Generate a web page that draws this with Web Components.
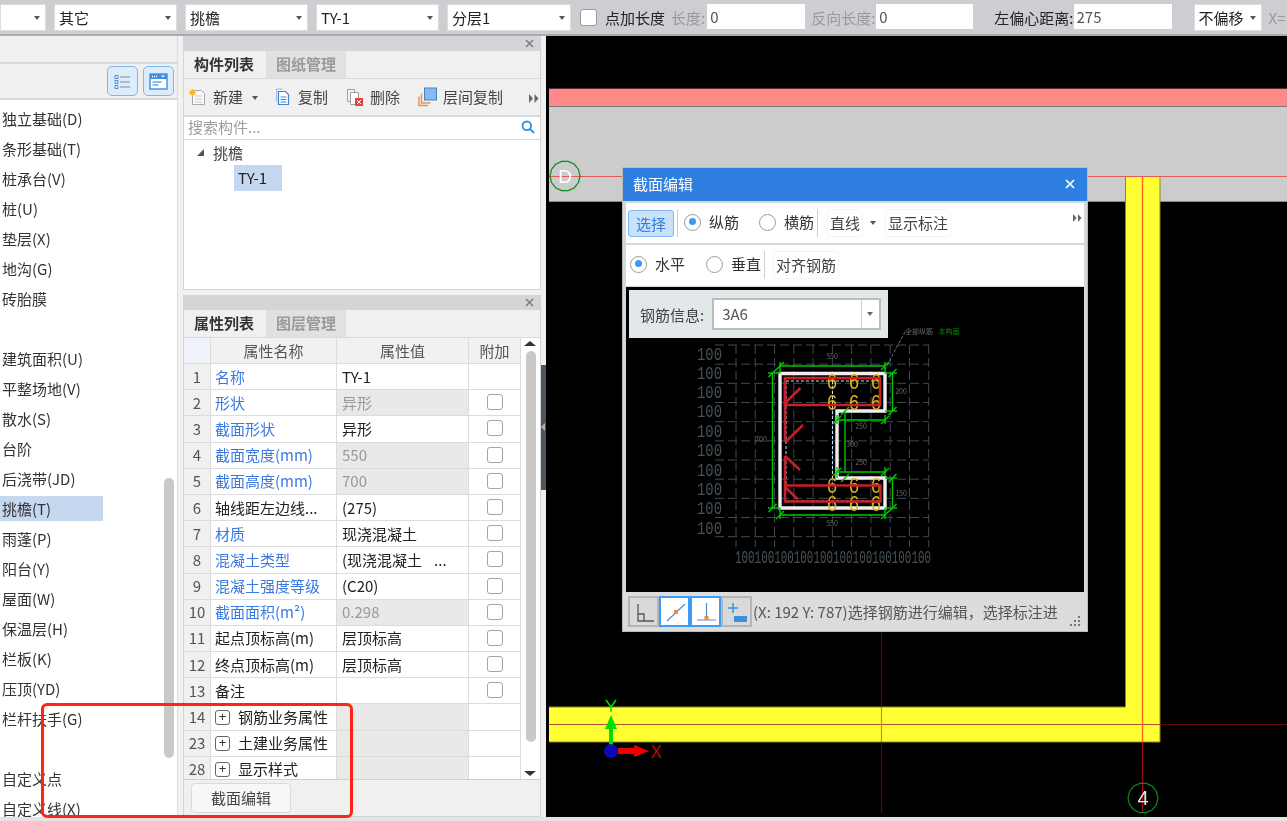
<!DOCTYPE html>
<html lang="zh">
<head>
<meta charset="utf-8">
<title>截面编辑</title>
<style>
    html, body { margin: 0; height: 100%; overflow: hidden; background: #e4e4e4; }
    body { font: 15px/20px "Noto Sans CJK SC", "Noto Sans", sans-serif; color: #222; }
</style>
</head>
<body>
<cad-app></cad-app>

<script>
// little helper so each element only has to hand over its css and markup
class Base extends HTMLElement {
    constructor() {
        super();
        this.attachShadow({ mode: 'open' });
    }
    connectedCallback() { this.render(); }
    paint(css, html) {
        this.shadowRoot.innerHTML = `<style>${css}</style>${html}`;
    }
}

class CadCombo extends Base {
    render() {
        const w = this.getAttribute('w') || 123;
        this.paint(`
            :host { display: block; flex: none; width: ${w}px; height: 27px; }
            .box {
                height: 100%; box-sizing: border-box; background: #fff; border: 1px solid #dcdcdc;
                display: flex; align-items: center; justify-content: space-between; padding: 0 5px 0 4px;
            }
            i { width: 0; height: 0; border: 3.5px solid transparent; border-top: 4px solid #555; border-bottom: 0; }
        `, `<div class="box"><span><slot></slot></span><i></i></div>`);
    }
}
customElements.define('cad-combo', CadCombo);

class CadField extends Base {
    render() {
        const w = this.getAttribute('w') || 98;
        const gap = this.getAttribute('gap') || 0;
        const muted = this.hasAttribute('muted');
        this.paint(`
            :host { display: flex; flex: none; align-items: center; gap: ${gap}px; color: ${muted ? '#9a9a9a' : '#222'}; }
            .val { width: ${w}px; box-sizing: border-box; height: 25px; margin-top: -2px; background: #fff; padding-left: 3px; line-height: 25px; color: #555; }
        `, `<slot></slot><div class="val">${this.getAttribute('value')}</div>`);
    }
}
customElements.define('cad-field', CadField);

class TopBar extends Base {
    render() {
        this.paint(`
            :host {
                display: flex; align-items: center; height: 36px; box-sizing: border-box; flex: none;
                background: #ccced2; border-bottom: 2px solid #a9abae; overflow: hidden; white-space: nowrap; padding-top: 1px;
            }
            .g8 { margin-left: 8px; }
            .chk { flex: none; width: 15px; height: 15px; margin-left: 9px; background: #fff; border: 1px solid #9b9b9b; border-radius: 3px; }
            .lab { margin-left: 8px; }
        `, `
            <cad-combo w="46"></cad-combo>
            <cad-combo class="g8">其它</cad-combo>
            <cad-combo class="g8">挑檐</cad-combo>
            <cad-combo class="g8">TY-1</cad-combo>
            <cad-combo class="g8" w="124">分层1</cad-combo>
            <div class="chk"></div>
            <span class="lab">点加长度</span>
            <cad-field muted value="0" gap="2" style="margin-left:6px">长度:</cad-field>
            <cad-field muted value="0" gap="1" w="97" style="margin-left:6px">反向长度:</cad-field>
            <cad-field value="275" style="margin-left:21px">左偏心距离:</cad-field>
            <cad-combo w="68" style="margin-left:22px">不偏移</cad-combo>
            <span style="margin-left:7px;color:#9a9a9a">X=</span>
        `);
    }
}
customElements.define('top-bar', TopBar);

const NAV_ITEMS = [
    '独立基础(D)', '条形基础(T)', '桩承台(V)', '桩(U)', '垫层(X)', '地沟(G)', '砖胎膜', '',
    '建筑面积(U)', '平整场地(V)', '散水(S)', '台阶', '后浇带(JD)', '挑檐(T)', '雨蓬(P)', '阳台(Y)',
    '屋面(W)', '保温层(H)', '栏板(K)', '压顶(YD)', '栏杆扶手(G)', '', '自定义点', '自定义线(X)'
];

class NavList extends Base {
    render() {
        const rows = NAV_ITEMS.map(t => {
            const on = t === '挑檐(T)' ? ' class="on"' : '';
            return `<div class="row"><span${on}>${t}</span></div>`;
        }).join('');
        this.paint(`
            :host { display: flex; flex-direction: column; flex: none; width: 178px; box-sizing: border-box; border-right: 1px solid #dcdcdc; background: #fff; overflow: hidden; position: relative; }
            .head { height: 26px; background: #f0f0f0; border-bottom: 2px solid #d9d9d9; flex: none; }
            .tools { height: 34px; background: #f0f0f0; border-bottom: 2px solid #d9d9d9; flex: none; display: flex; justify-content: flex-end; align-items: center; gap: 5px; padding-right: 3px; }
            .tools div { width: 31px; height: 30px; box-sizing: border-box; background: #dcecfb; border: 1.5px solid #7cb8f0; border-radius: 5px; display: flex; align-items: center; justify-content: center; }
            .list { padding-top: 3px; color: #333; }
            .row { height: 30px; display: flex; align-items: center; padding-left: 2px; }
            .row span { display: block; height: 25px; line-height: 25px; white-space: nowrap; }
            .row .on { background: #c5d8ef; width: 103px; margin-left: -2px; padding-left: 2px; box-sizing: border-box; }
            .bar { position: absolute; left: 164px; top: 442px; width: 10px; height: 280px; border-radius: 5px; background: #c9c9c9; }
        `, `
            <div class="head"></div>
            <div class="tools">
                <div><svg width="17" height="17" viewBox="0 0 17 17" fill="none" stroke="#4a90d9"><path d="M1 2.5h3v3h-3zM1 7.5h3v3h-3zM1 12.5h3v3h-3z" stroke-width="1"/><path d="M6 4h10M6 9h10M6 14h10" stroke="#888" stroke-width="1.2"/></svg></div>
                <div><svg width="19" height="17" viewBox="0 0 19 17"><rect x="1" y="1" width="17" height="15" fill="#fff" stroke="#3d8fe0" stroke-width="1.4"/><rect x="1" y="1" width="17" height="5" fill="#3d8fe0"/><path d="M3 3.5h5" stroke="#fff" stroke-dasharray="1 1" stroke-width="1.5"/><path d="M12 2.5h4l-2 2z" fill="#fff"/><path d="M3.5 9h9M3.5 12h6" stroke="#6aa8e6" stroke-width="1.3"/></svg></div>
            </div>
            <div class="list">${rows}</div>
            <div class="bar"></div>
        `);
    }
}
customElements.define('nav-list', NavList);

class DockPanel extends Base {
    render() {
        const tabs = this.getAttribute('tabs').split(',');
        this.paint(`
            :host { display: flex; flex-direction: column; box-sizing: border-box; width: 358px; border: 1px solid #d2d4d6; border-top: 0; background: #fff; overflow: hidden; }
            .cap { height: 15px; flex: none; background: #d3d5d9; display: flex; justify-content: flex-end; align-items: center; padding-right: 6px; }
            .tabs { height: 28px; flex: none; display: flex; background: #f0f0f0; border-bottom: 1px solid #d9d9d9; box-sizing: border-box; }
            .tabs span { width: 80px; text-align: center; line-height: 25px; }
            .tabs .on { font-weight: 700; color: #333; }
            .tabs .off { margin-left: 2px; background: #e1e1e1; color: #9a9a9a; font-weight: 700; }
            .body { flex: 1; display: flex; flex-direction: column; min-height: 0; }
        `, `
            <div class="cap"><svg width="9" height="9" viewBox="0 0 9 9"><path d="M1 1l7 7M8 1l-7 7" stroke="#7d7f82" stroke-width="1.6"/></svg></div>
            <div class="tabs"><span class="on">${tabs[0]}</span><span class="off">${tabs[1]}</span></div>
            <div class="body"><slot></slot></div>
        `);
    }
}
customElements.define('dock-panel', DockPanel);

class ComponentList extends Base {
    render() {
        this.paint(`
            :host { display: flex; flex-direction: column; flex: 1; }
            .tools { height: 36px; flex: none; background: #f0f0f0; border-bottom: 2px solid #d9d9d9; display: flex; align-items: center; padding-left: 5px; position: relative; white-space: nowrap; }
            .tools svg { flex: none; }
            .t { margin-left: 6px; color: #444; }
            .arrow { width: 0; height: 0; border: 3.5px solid transparent; border-top: 4px solid #555; border-bottom: 0; margin: 2px 0 0 9px; }
            .more { position: absolute; left: 345px; top: 15px; }
            .search { height: 23px; flex: none; box-sizing: border-box; padding: 0 5px 2px 4px; border-bottom: 1px solid #d9d9d9; display: flex; align-items: center; justify-content: space-between; color: #9d9d9d; }
            .tree { flex: 1; position: relative; }
            .tree .node { display: flex; align-items: center; height: 25px; padding-left: 13px; gap: 9px; color: #444; }
            .tree i { width: 0; height: 0; border-left: 7px solid transparent; border-bottom: 7px solid #555; }
            .leaf { margin: 0 0 0 50px; width: 48px; height: 26px; line-height: 25px; background: #c5d8ef; box-sizing: border-box; padding-left: 4px; }
        `, `
            <div class="tools">
                <svg width="18" height="18" viewBox="0 0 18 18"><path d="M3.5 2.5h9l3 3v11h-12z" fill="#fafafa" stroke="#a8a8a8"/><path d="M6 8h7M6 11h7M6 14h7" stroke="#c8c8c8"/><path d="M3.5 0.5l.9 2 2-.9-.9 2 2 .9-2 .9.9 2-2-.9-.9 2-.9-2-2 .9.9-2-2-.9 2-.9-.9-2 2 .9z" fill="#f5b32c"/></svg>
                <span class="t">新建</span><i class="arrow"></i>
                <svg style="margin-left:17px" width="16" height="18" viewBox="0 0 16 18"><path d="M1.5 1h6" stroke="#9cbbe0"/><path d="M1.5 1v13" stroke="#9cbbe0"/><path d="M3.5 3.5h7l3 3v10h-10z" fill="#fff" stroke="#3d85d0" stroke-width="1.2"/><path d="M5.5 9h6M5.5 11.5h6M5.5 14h6" stroke="#3d85d0"/></svg>
                <span class="t" style="margin-left:7px">复制</span>
                <svg style="margin-left:18px" width="18" height="18" viewBox="0 0 18 18"><path d="M1.5 1.5h7v12h-7z" fill="#f4f4f4" stroke="#a0a0a0"/><path d="M4.5 4.5h8v12h-8z" fill="#fff" stroke="#a0a0a0"/><rect x="9" y="10" width="8" height="8" fill="#e2453c"/><path d="M11 12l4 4M15 12l-4 4" stroke="#fff"/></svg>
                <span class="t">删除</span>
                <svg style="margin-left:18px" width="19" height="20" viewBox="0 0 19 20"><path d="M1 9.5v9h9" fill="none" stroke="#f0923a" stroke-width="1.4"/><path d="M3.5 6.5v9.500h9" fill="none" stroke="#f0923a" stroke-width="1.4"/><rect x="6.500" y="1" width="12" height="12" fill="#8ab8ec" stroke="#3d85d0"/></svg>
                <span class="t">层间复制</span>
                <svg class="more" width="10" height="9" viewBox="0 0 10 9"><path d="M0 0l4 4.500-4 4.500zM5.500 0l4 4.500-4 4.500z" fill="#666"/></svg>
            </div>
            <div class="search"><span>搜索构件...</span>
                <svg width="14" height="14" viewBox="0 0 14 14" fill="none" stroke="#2f8fdc" stroke-width="1.8"><circle cx="5.800" cy="5.800" r="4.300"/><path d="M9 9l4 4"/></svg>
            </div>
            <div class="tree">
                <div class="node"><i></i><span>挑檐</span></div>
                <div class="leaf">TY-1</div>
            </div>
        `);
    }
}
customElements.define('component-list', ComponentList);

// [number, name, value, blue name, greyed value, checkbox, group row]
const PROP_ROWS = [
    [1, '名称', 'TY-1', 1, 0, 0],
    [2, '形状', '异形', 1, 1, 1],
    [3, '截面形状', '异形', 1, 0, 1],
    [4, '截面宽度(mm)', '550', 1, 1, 1],
    [5, '截面高度(mm)', '700', 1, 1, 1],
    [6, '轴线距左边线...', '(275)', 0, 0, 1],
    [7, '材质', '现浇混凝土', 1, 0, 1],
    [8, '混凝土类型', '(现浇混凝土<b>...</b>', 1, 0, 1],
    [9, '混凝土强度等级', '(C20)', 1, 0, 1],
    [10, '截面面积(m²)', '0.298', 1, 1, 1],
    [11, '起点顶标高(m)', '层顶标高', 0, 0, 1],
    [12, '终点顶标高(m)', '层顶标高', 0, 0, 1],
    [13, '备注', '', 0, 0, 1],
    [14, '钢筋业务属性', '', 0, 2, 0, 1],
    [23, '土建业务属性', '', 0, 2, 0, 1],
    [28, '显示样式', '', 0, 2, 0, 1]
];

class PropTable extends Base {
    render() {
        const cells = PROP_ROWS.map(([n, name, val, blue, grey, chk, group]) => {
            const plus = group ? '<em>+</em>' : '';
            const vCls = grey === 1 ? 'v grey' : grey === 2 ? 'v fill' : 'v';
            return `<div class="c n">${n}</div>
                <div class="c name${blue ? ' blue' : ''}${group ? ' grp' : ''}">${plus}<span>${name}</span></div>
                <div class="c ${vCls}">${val}</div>
                <div class="c a">${chk ? '<u></u>' : ''}</div>`;
        }).join('');
        this.paint(`
            :host { display: flex; flex-direction: column; flex: 1; min-height: 0; }
            .wrap { flex: 1; display: flex; min-height: 0; overflow: hidden; border-bottom: 1px solid #cfcfcf; }
            .grid { display: grid; grid-template-columns: 27px 126px 132px 52px; grid-template-rows: 26px; grid-auto-rows: 26.2px; width: 337px; flex: none; align-content: start; }
            .c { box-sizing: border-box; border-right: 1.5px solid #dcdcdc; border-bottom: 1.5px solid #dcdcdc; display: flex; align-items: center; white-space: nowrap; padding-left: 4px; color: #222; background: #fff; }
            .h { background: #f1f1f1; justify-content: center; padding: 0; color: #555; }
            .h0 { background: #f0f4fa; }
            .n { background: #f0f0f0; justify-content: center; padding: 0; color: #555; }
            .v { padding-left: 5px; }
            .blue { color: #3b78e0; }
            .grey { background: #e9e9e9; color: #9a9a9a; }
            .fill { background: #e9e9e9; }
            .v b { font-weight: 400; margin-left: 12px; }
            .a { justify-content: center; padding: 0; }
            u { display: block; width: 16px; height: 16px; box-sizing: border-box; border: 1.5px solid #a5a5a5; border-radius: 3px; background: #fff; margin-top: -1px; }
            .grp em { display: block; box-sizing: border-box; width: 15px; height: 15px; border: 1.2px solid #666; border-radius: 3px; font: 13px/12px "Liberation Sans", sans-serif; text-align: center; margin-right: 8px; color: #333; }
            .rail { flex: 1; position: relative; background: #fff; }
            .rail i { position: absolute; left: 3px; width: 0; height: 0; border: 6px solid transparent; border-top: 0; border-bottom: 5px solid #333; top: 3px; }
            .rail i.down { top: auto; bottom: 3px; border-bottom: 0; border-top: 5px solid #333; }
            .rail div { position: absolute; left: 5px; top: 13px; width: 10px; height: 391px; background: #c9c9c9; border-radius: 5px; }
            .foot { height: 36px; flex: none; background: #f0f0f0; display: flex; align-items: center; padding-left: 7px; }
            .btn { width: 100px; height: 30px; box-sizing: border-box; border: 1.5px solid #d5dbe4; border-radius: 4px; background: #f7f7f7; text-align: center; line-height: 27px; color: #444; }
        `, `
            <div class="wrap">
                <div class="grid">
                    <div class="c h h0"></div><div class="c h">属性名称</div><div class="c h">属性值</div><div class="c h">附加</div>
                    ${cells}
                </div>
                <div class="rail"><i></i><div></div><i class="down"></i></div>
            </div>
            <div class="foot"><div class="btn">截面编辑</div></div>
        `);
    }
}
customElements.define('prop-table', PropTable);

class RadioOpt extends Base {
    render() {
        const on = this.hasAttribute('on');
        this.paint(`
            :host { display: inline-flex; align-items: center; gap: 8px; flex: none; color: #333; }
            i { display: block; width: 17px; height: 17px; box-sizing: border-box; border: 1.5px solid #9a9a9a; border-radius: 50%; background: #fff; position: relative; }
            i.on::after { content: ""; position: absolute; left: 3.5px; top: 3.5px; width: 7px; height: 7px; border-radius: 50%; background: #3f96f5; }
        `, `<i class="${on ? 'on' : ''}"></i><slot></slot>`);
    }
}
customElements.define('radio-opt', RadioOpt);

class RebarDrawing extends Base {
    render() {
        const xs = [], ys = [];
        for (let i = 0; i < 11; i++) {
            xs.push(736 + i * 19.27);
            ys.push(345 + i * 19.17);
        }
        const grid = xs.map(x => `<path d="M${x} 345V547"/>`).join('') + ys.map(y => `<path d="M715 ${y}H929"/>`).join('');
        const leftLabels = [354, 373, 392, 411, 431, 450, 470, 489, 508, 528]
            .map(y => `<text x="697" y="${y + 6}" textLength="25" lengthAdjust="spacingAndGlyphs">100</text>`).join('');
        const bottomLabels = `<text x="735" y="563" textLength="196" lengthAdjust="spacingAndGlyphs">${'100'.repeat(10)}</text>`;
        const sixes = [];
        [832, 854, 876].forEach(x => [389, 410, 493, 511].forEach(y => {
            sixes.push(`<text x="${x - 5}" y="${y}" textLength="10" lengthAdjust="spacingAndGlyphs">6</text>`);
        }));
        // a dimension line end: short diagonal plus the witness tick
        const tick = (x, y) => `<path d="M${x - 4} ${y + 4}L${x + 4} ${y - 4}"/>`;
        const dims = [
            'M780 366H885', 'M772.500 373V508', 'M780 515H885', 'M892.500 373V411', 'M892.500 478V508',
            'M837 420H885', 'M845 411V472', 'M837 472H885',
            'M780 362V373', 'M885 362V373', 'M768 373H780', 'M768 508H780', 'M780 508V519', 'M885 508V519',
            'M885 373H897', 'M885 411H897', 'M885 478H897', 'M885 508H897', 'M837 415V424', 'M885 415V424', 'M885 467V476', 'M837 467V478'
        ].map(d => `<path d="${d}"/>`).join('');
        const ticks = [[780, 366], [885, 366], [772.5, 373], [772.5, 508], [780, 515], [885, 515], [892.5, 373], [892.5, 411],
            [892.5, 478], [892.5, 508], [837, 420], [885, 420], [845, 411], [837, 472], [885, 472], [845, 478]].map(p => tick(p[0], p[1])).join('');
        this.paint(`
            :host { display: block; flex: 1; min-height: 0; background: #000; position: relative; }
            svg { display: block; position: absolute; left: 0; top: 0; }
            .num { font: 18px "Liberation Mono", monospace; fill: #46525a; }
            .six { font: 22px "Liberation Sans", sans-serif; fill: #e0b410; }
            .tiny { font: 7px "Noto Sans CJK SC", sans-serif; fill: #6a6a6a; text-anchor: middle; }
            .steel { position: absolute; left: 3px; top: 3px; width: 259px; height: 48px; box-sizing: border-box; background: #e2e8ea; display: flex; align-items: center; padding: 2px 0 0 11px; gap: 8px; color: #444; }
            .pick { width: 169px; height: 32px; box-sizing: border-box; border: 2px solid #bcbcbc; background: #fff; display: flex; align-items: center; padding-left: 8px; color: #555; margin-top: -2px; position: relative; }
            .pick b { position: absolute; right: 0; top: 0; bottom: 0; width: 17px; border-left: 1.5px solid #cfcfcf; }
            .pick b::after { content: ""; position: absolute; left: 5px; top: 12px; border: 3.5px solid transparent; border-top: 4px solid #666; border-bottom: 0; }
        `, `
            <svg width="458" height="305" viewBox="626 287 458 305">
                <g fill="none" stroke="#3e4a52" stroke-dasharray="9 4">${grid}</g>
                <g class="num">${leftLabels}${bottomLabels}</g>
                <path d="M885 370L892 356L905 332" fill="none" stroke="#777" stroke-dasharray="3 2"/>
                <text class="tiny" x="919" y="334">全部纵筋</text>
                <text class="tiny" x="949" y="334" style="fill:#0a8a0a">本构面</text>
                <text class="tiny" x="832" y="359">550</text>
                <text class="tiny" x="832" y="526">550</text>
                <text class="tiny" x="761" y="442">700</text>
                <text class="tiny" x="901" y="394">200</text>
                <text class="tiny" x="861" y="429">250</text>
                <text class="tiny" x="852" y="447">300</text>
                <text class="tiny" x="861" y="465">250</text>
                <text class="tiny" x="901" y="496">150</text>
                <path d="M780 373.500H885V411H837V478H885V508H780Z" fill="none" stroke="#efefef" stroke-width="3.400"/>
                <path d="M786 381H880M786 485.500H880M786 381V486M832.500 381V480M786 501H880" fill="none" stroke="#c6dcf0" stroke-dasharray="3 2"/>
                <g class="six">${sixes.join('')}</g>
                <g fill="none" stroke="#00c800" stroke-width="1.400">${dims}${ticks}</g>
                <g fill="none" stroke="#c8202a" stroke-width="2.500">
                    <path d="M785 378H880V405H785Z"/>
                    <path d="M785 378V440.500H787L803 425M785 403L800.500 388"/>
                    <path d="M785 456V485.500M785 456L800 470"/>
                    <path d="M785 485.500H880.500V501.500H785ZM785 487L797.500 499"/>
                </g>
            </svg>
            <div class="steel">钢筋信息:<div class="pick">3A6<b></b></div></div>
        `);
    }
}
customElements.define('rebar-drawing', RebarDrawing);

class StatusTool extends Base {
    render() {
        const on = this.hasAttribute('on');
        this.paint(`
            :host { display: block; flex: none; width: 31px; height: 31px; box-sizing: border-box; border: 2px solid ${on ? '#3f9cf5' : '#b5b5b5'}; background: ${on ? '#fff' : '#d9d9d9'}; }
            ::slotted(svg) { display: block; margin: 3px; }
        `, `<slot></slot>`);
    }
}
customElements.define('status-tool', StatusTool);

class SectionDialog extends Base {
    render() {
        this.paint(`
            :host { position: absolute; left: 77px; top: 132px; width: 464px; height: 463px; display: flex; flex-direction: column; background: #d3d6da; box-shadow: 0 0 0 1px #b8bcc0; }
            .title { height: 33px; flex: none; box-sizing: border-box; padding: 0 12px 2px 10px; background: #2e7fe0; color: #fff; display: flex; align-items: center; justify-content: space-between; margin-bottom: 2px; }
            .row { flex: none; margin: 0 3px 2px; background: #fff; display: flex; align-items: center; position: relative; white-space: nowrap; box-sizing: border-box; }
            .r1 { height: 40px; padding: 0 0 2px 2px; }
            .r2 { height: 41px; padding: 0 0 3px 4px; margin-bottom: 1px; }
            .sel { width: 46px; height: 27px; box-sizing: border-box; border: 1.5px solid #82b6ee; border-radius: 3px; background: #c9e1fb; color: #2f7fd8; text-align: center; line-height: 25px; margin-top: 2px; }
            .sep { width: 1px; align-self: stretch; margin: 6px 0 4px; background: #cfcfcf; }
            .txt { color: #444; margin-top: 2px; padding: 3px 2px; border-radius: 3px; box-shadow: 0 0 0 1px #f4f4f4; }
            .tri { width: 0; height: 0; border: 3px solid transparent; border-top: 4px solid #555; border-bottom: 0; margin: 2px 0 0 8px; }
            .more { position: absolute; left: 447px; top: 11px; }
            .draw { flex: 1; display: flex; margin: 0 3px; min-height: 0; }
            .status { height: 39px; flex: none; background: #dcdcdc; display: flex; align-items: center; padding-left: 5px; position: relative; color: #555; white-space: nowrap; }
            .status .msg { width: 307px; margin-left: 1px; overflow: hidden; }
            .grip { position: absolute; right: 6px; bottom: 4px; }
        `, `
            <div class="title"><span>截面编辑</span>
                <svg width="10" height="10" viewBox="0 0 10 10"><path d="M1 1l8 8M9 1l-8 8" stroke="#fff" stroke-width="1.700"/></svg>
            </div>
            <div class="row r1">
                <div class="sel">选择</div>
                <div class="sep" style="margin-left:3px"></div>
                <radio-opt on style="margin-left:6px">纵筋</radio-opt>
                <radio-opt style="margin-left:20px">横筋</radio-opt>
                <div class="sep" style="margin-left:3px"></div>
                <span class="txt" style="margin-left:10px">直线</span><i class="tri"></i>
                <span class="txt" style="margin-left:10px">显示标注</span>
                <svg class="more" width="9" height="8" viewBox="0 0 9 8"><path d="M0 0l3.500 4-3.500 4zM5 0l3.500 4-3.500 4z" fill="#666"/></svg>
            </div>
            <div class="row r2">
                <radio-opt on>水平</radio-opt>
                <radio-opt style="margin-left:21px">垂直</radio-opt>
                <div class="sep" style="margin-left:3px"></div>
                <span class="txt" style="margin-left:9px">对齐钢筋</span>
            </div>
            <div class="draw"><rebar-drawing></rebar-drawing></div>
            <div class="status">
                <status-tool><svg width="23" height="23" viewBox="0 0 23 23" fill="none" stroke="#555" stroke-width="1.300"><path d="M5 3V20H21M5 13H11V20"/></svg></status-tool>
                <status-tool on><svg width="23" height="23" viewBox="0 0 23 23"><path d="M3 20L21 3" stroke="#4a90d9" stroke-width="1.200"/><rect x="10" y="9" width="4" height="4" fill="#ee8b3a"/></svg></status-tool>
                <status-tool on><svg width="23" height="23" viewBox="0 0 23 23"><path d="M11.500 2V19M2 19H21" stroke="#4a90d9" stroke-width="1.200"/><rect x="9.500" y="15" width="4" height="4" fill="#ee8b3a"/></svg></status-tool>
                <status-tool><svg width="25" height="23" viewBox="0 0 25 23"><path d="M7 2V12M2 7H12" stroke="#3d8fe0" stroke-width="1.500"/><rect x="8" y="15" width="13" height="6" fill="#3d8fe0"/></svg></status-tool>
                <div class="msg">(X: 192 Y: 787)选择钢筋进行编辑，选择标注进</div>
                <svg class="grip" width="11" height="11" viewBox="0 0 11 11" fill="#777"><rect x="8" y="0" width="2" height="2"/><rect x="4" y="4" width="2" height="2"/><rect x="8" y="4" width="2" height="2"/><rect x="0" y="8" width="2" height="2"/><rect x="4" y="8" width="2" height="2"/><rect x="8" y="8" width="2" height="2"/></svg>
            </div>
        `);
    }
}
customElements.define('section-dialog', SectionDialog);

class CadView extends Base {
    // rough circle of the axis bubbles, they are polygons in the original
    bubble(cx, cy, r) {
        const pts = [];
        for (let i = 0; i < 14; i++) {
            const a = i / 14 * Math.PI * 2;
            pts.push((cx + Math.cos(a) * r).toFixed(1) + ',' + (cy + Math.sin(a) * r).toFixed(1));
        }
        return `<polygon points="${pts.join(' ')}" fill="none" stroke="#0a8a1e" stroke-width="1.200"/>`;
    }
    render() {
        this.paint(`
            :host { display: block; flex: 1; position: relative; background: #000; overflow: hidden; }
            svg.scene { position: absolute; left: 0; top: 0; }
            .ax { font: 19px "Liberation Sans", sans-serif; }
        `, `
            <svg class="scene" width="741" height="781" viewBox="546 36 741 781">
                <rect x="549" y="88.500" width="738" height="18" fill="#ff8888"/>
                <path d="M549 88.500H1287" stroke="#4a3030"/><path d="M549 106.500H1287" stroke="#777"/>
                <rect x="549" y="107" width="738" height="94" fill="#cccccc"/>
                <path d="M549 201.500H1287" stroke="#8a8a8a"/>
                <path d="M549 176.500H1287" stroke="#e85a5a" stroke-width="1.200"/>
                ${this.bubble(565, 176, 15)}
                <text x="565" y="183" text-anchor="middle" font-family="Liberation Sans" font-size="19" fill="#fff">D</text>

                <path d="M1125.500 177H1160V742H549V707H1125.500Z" fill="#ffff33"/>
                <path d="M549 707H1125.500V177M1160 177V742H549" fill="none" stroke="#8a8a20" stroke-width="1"/>
                <path d="M549 724.500H1160" stroke="#b0502a" stroke-width="1.200"/>
                <path d="M1160 724.500H1287" stroke="#6a0606" stroke-width="1.200"/>
                <path d="M1142.500 177V742" stroke="#ff6a20" stroke-width="1.400"/>
                <path d="M1142.500 742V813" stroke="#a00c0c" stroke-width="1.200"/>
                <path d="M881.500 631V707M881.500 742V813" stroke="#6a0606" stroke-width="1.200"/>
                <path d="M881.500 707V742" stroke="#c09030" stroke-width="1.200"/>
                ${this.bubble(1143, 798, 15)}
                <text x="1143" y="805" text-anchor="middle" font-family="Liberation Sans" font-size="20" fill="#e8e8e8">4</text>

                <path d="M611 745V729" stroke="#00e000" stroke-width="4"/>
                <path d="M611 715L617 729H605Z" fill="#00e000"/>
                <path d="M606 700L611 707L616 700M611 707V712" fill="none" stroke="#00dd00" stroke-width="1.500"/>
                <path d="M618 751H634" stroke="#f00000" stroke-width="6"/>
                <path d="M649 751L634 745V757Z" fill="#f00000"/>
                <ellipse cx="611" cy="751" rx="7" ry="7" fill="#0a0ab4"/>
                <text class="ax" x="651" y="758" fill="#e00000" textLength="11" lengthAdjust="spacingAndGlyphs">X</text>
            </svg>
            <section-dialog></section-dialog>
        `);
    }
}
customElements.define('cad-view', CadView);

class CadApp extends Base {
    render() {
        this.paint(`
            /* the source picture is a soft upscaled capture */
            :host { display: flex; flex-direction: column; width: 1287px; height: 821px; position: relative; overflow: hidden; filter: blur(0.35px); }
            .main { display: flex; height: 781px; flex: none; background: #f2f2f2; }
            .col { display: flex; flex-direction: column; gap: 5px; margin-left: 5px; flex: none; }
            .split { width: 5px; flex: none; position: relative; background: #f0f0f0; }
            .split div { position: absolute; left: 0; top: 329px; width: 5px; height: 125px; background: #4c5660; }
            .split div::after { content: ""; position: absolute; left: 0; top: 58px; border: 4px solid transparent; border-left: 0; border-right: 4px solid #a9b0b6; }
            .note { position: absolute; left: 41px; top: 703px; width: 312px; height: 115px; box-sizing: border-box; border: 3px solid #ff2414; border-radius: 6px; }
        `, `
            <top-bar></top-bar>
            <div class="main">
                <nav-list></nav-list>
                <div class="col">
                    <dock-panel tabs="构件列表,图纸管理" style="height:254px"><component-list></component-list></dock-panel>
                    <dock-panel tabs="属性列表,图层管理" style="height:522px"><prop-table></prop-table></dock-panel>
                </div>
                <div class="split"><div></div></div>
                <cad-view></cad-view>
            </div>
            <div class="note"></div>
        `);
    }
}
customElements.define('cad-app', CadApp);
</script>
</body>
</html>
